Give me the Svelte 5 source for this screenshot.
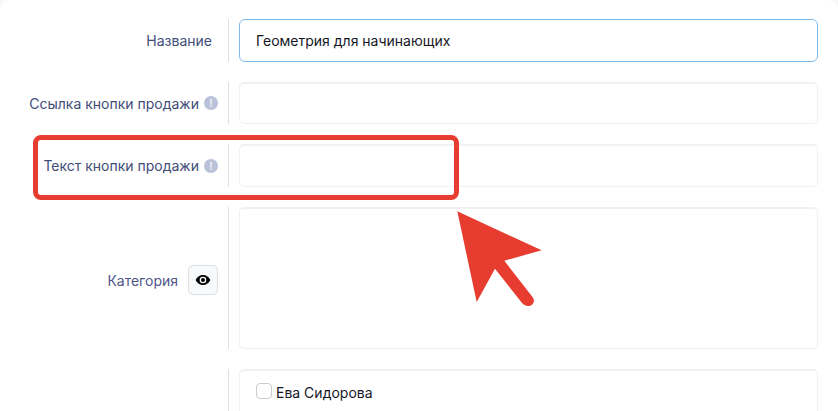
<script lang="ts">
	const annotated = 'Текст кнопки продажи';
</script>

<div class="card">
	<div class="row first">
		<div class="label"><span class="plain">Название</span></div>
		<div class="field"><div class="input active">Геометрия для начинающих</div></div>
	</div>
	<div class="row second">
		<div class="label">
			<span>Ссылка кнопки продажи</span>
			<span class="hint">!</span>
		</div>
		<div class="field"><div class="input"></div></div>
	</div>
	<div class="row third">
		<div class="label">
			<span>{annotated}</span>
			<span class="hint">!</span>
		</div>
		<div class="field"><div class="input"></div></div>
	</div>
	<div class="row fourth">
		<div class="label category">
			<span class="purple">Категория</span>
			<button class="eye" aria-label="Показать">
				<svg width="16" height="16" viewBox="0 0 24 24">
					<path d="M12 4.500C7 4.500 2.700 7.600 1 12c1.700 4.400 6 7.500 11 7.500s9.300-3.100 11-7.500c-1.700-4.400-6-7.500-11-7.500zM12 17a5 5 0 1 1 0-10 5 5 0 0 1 0 10zm0-8a3 3 0 1 0 0 6 3 3 0 0 0 0-6z" />
				</svg>
			</button>
		</div>
		<div class="field"><div class="input"></div></div>
	</div>
	<div class="row last">
		<div class="label"></div>
		<div class="field">
			<div class="input list">
				<label class="check"><span class="box"></span>Ева Сидорова</label>
			</div>
		</div>
	</div>

	<div class="frame"></div>
	<svg class="arrow" width="90" height="100" viewBox="0 0 90 100">
		<path d="M2.300 2.300L86.700 41.300L49.300 51.700L77.500 88C82.500 94.500 73 101 67 94L40 59.700L21.700 93Z" fill="#e63d30" />
	</svg>
</div>

<style>
	:global(body) {
		margin: 0;
		background: #f8f8fa;
	}
	.card {
		position: relative;
		width: 838px;
		height: 411px;
		overflow: hidden;
		box-sizing: border-box;
		padding: 19px 20px 0 0;
		display: flex;
		flex-direction: column;
		gap: 20px;
		background: #fff;
		border-radius: 10px 10px 0 0;
		font-family: Inter, "Noto Sans", sans-serif;
		font-size: 14px;
	}
	.row {
		display: grid;
		grid-template-columns: 229px 1fr;
		flex-shrink: 0;
	}
	.first, .third {
		height: 43px;
	}
	.second {
		height: 42px;
	}
	.fourth {
		height: 142px;
	}
	.last {
		height: 70px;
	}
	.label {
		display: flex;
		align-items: center;
		justify-content: flex-end;
		gap: 5px;
		padding-right: 10px;
		border-right: 1px solid #dedee3;
		color: #414c78;
		white-space: nowrap;
	}
	.plain {
		margin-right: 6px;
	}
	.hint {
		width: 14px;
		height: 14px;
		border-radius: 50%;
		background: #b9c2da;
		color: #eef0f6;
		font-size: 10px;
		font-weight: 700;
		line-height: 14px;
		text-align: center;
	}
	.category {
		gap: 10px;
		padding-top: 4px;
	}
	.purple {
		color: #4f5588;
	}
	.eye {
		width: 30px;
		height: 30px;
		padding: 0;
		display: flex;
		align-items: center;
		justify-content: center;
		background: #f8f9fb;
		border: 1px solid #dcdde1;
		border-radius: 5px;
	}
	.field {
		padding-left: 10px;
	}
	.input {
		box-sizing: border-box;
		height: 100%;
		padding: 0 16px;
		display: flex;
		align-items: center;
		background: #fff;
		border: 1px solid #f0f0f5;
		border-top-width: 2px;
		border-radius: 5px;
		color: #14171f;
	}
	.active {
		border: 1px solid #7eb9ee;
		border-radius: 6px;
	}
	.list {
		align-items: flex-start;
		padding: 12px 16px;
	}
	.check {
		display: flex;
		align-items: flex-start;
		gap: 4px;
		line-height: 20px;
	}
	.box {
		box-sizing: border-box;
		width: 16px;
		height: 16px;
		border: 1px solid #c9cbd1;
		border-radius: 4px;
	}
	.frame {
		position: absolute;
		left: 33px;
		top: 135px;
		width: 426px;
		height: 65px;
		box-sizing: border-box;
		border: 5px solid #e63d30;
		border-radius: 8px;
	}
	.arrow {
		position: absolute;
		left: 455px;
		top: 209px;
	}
</style>
